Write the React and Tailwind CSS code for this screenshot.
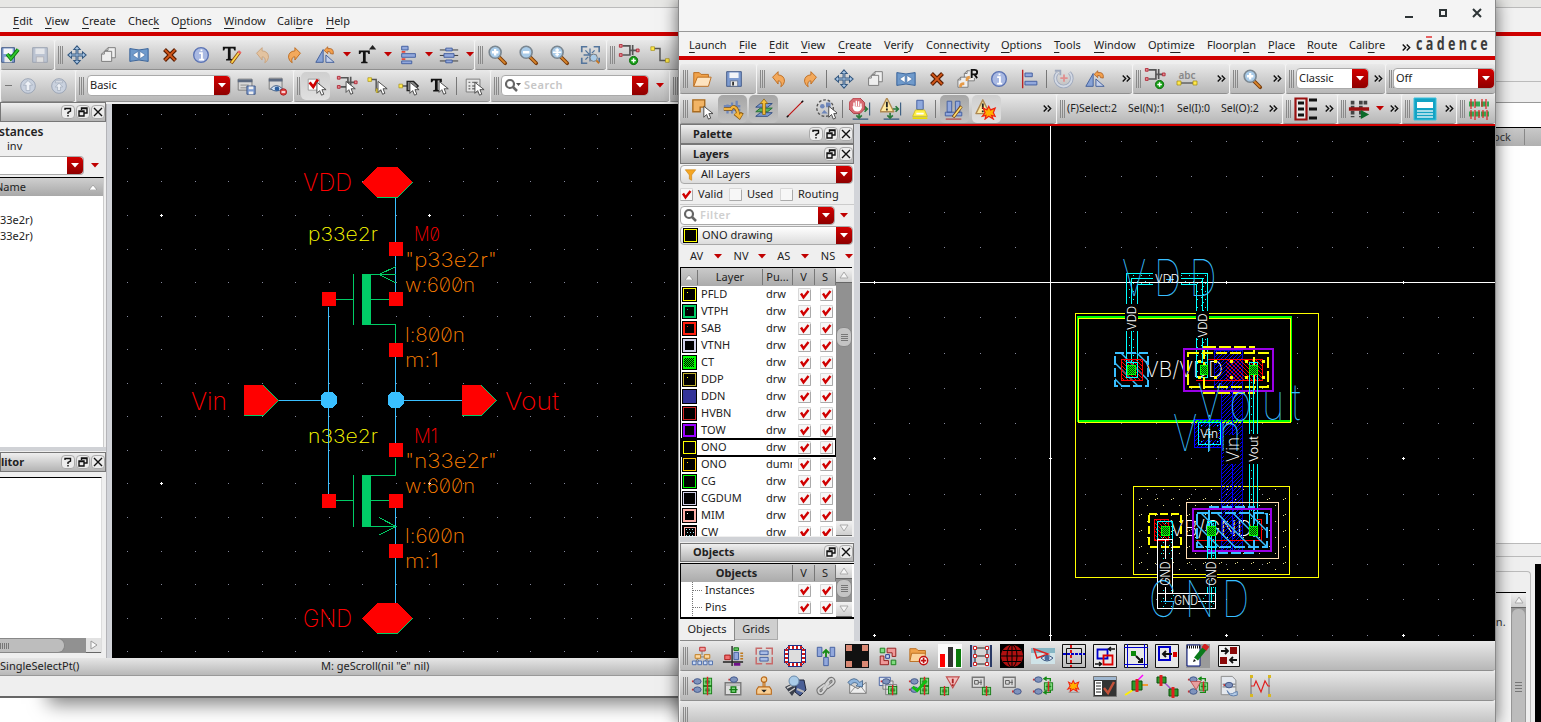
import React from "react";

const UI = "font-['Noto_Sans','Open_Sans',sans-serif]";
const STEEL = "#34587f";

const doc = (x, y) => (
  <g>
    <path d={`M${x + 3} ${y}h8v11h-11v-8z`} fill="#efefef" stroke="#777" />
    <path d={`M${x + 3} ${y}v3h-3`} fill="none" stroke="#777" />
  </g>
);
const cursor = (x, y) => (
  <path d={`M${x} ${y}v12l3-3l2 5l2.500-1l-2-5h4.500z`} fill="#fff" stroke="#444" strokeWidth="1" />
);
const lens = (mark) => (
  <g>
    <path d="M14 14l7 7" stroke="#7a3d0c" strokeWidth="4" strokeLinecap="round" />
    <path d="M14 14l6.500 6.500" stroke="#d9852b" strokeWidth="2" strokeLinecap="round" />
    <circle cx="10" cy="9" r="6.500" fill="#a9cbe8" stroke="#7b8791" strokeWidth="1.800" />
    {mark}
  </g>
);
const transistor = (
  <g fill="none">
    <path d="M5 5h8v10h-8M13 10h2M16 4v11M16 10h6" stroke="#555" strokeWidth="1.800" />
    <path d="M1.500 3.500h3v3h-3zM1.500 13.500h3v3h-3z" fill="#e58a92" stroke="#b02a38" />
    <path d="M20 8.500h3v3h-3z" fill="#e58a92" stroke="#b02a38" />
  </g>
);
const chip = (x, y) => (
  <g>
    <path d={`M${x} ${y + 4}h3M${x + 7} ${y + 4}h3`} stroke="#c33" strokeWidth="2" />
    <ellipse cx={x + 6} cy={y + 4} rx="4" ry="3" fill="#7f93bd" stroke="#3d5488" />
  </g>
);
const cell = (x, y) => (
  <g>
    <rect x={x + 0.5} y={y + 0.5} width="9" height="8" fill="#7fdc7f" stroke="#167a16" />
    <path d={`M${x + 2} ${y + 4.5}h6M${x + 3.5} ${y + 2}v5M${x + 6.5} ${y + 2}v5`} stroke="#167a16" />
    <path d={`M${x + 5} ${y - 1}v11`} stroke="#d22" strokeWidth="1.500" />
  </g>
);
const warn = (
  <g>
    <path d="M8.500 2L16 17H1z" fill="#ffe9a0" stroke="#b08a52" strokeWidth="1.500" strokeLinejoin="round" />
    <path d="M8.500 6v6M8.500 13.500v2" stroke="#222" strokeWidth="2" />
  </g>
);
const burst = (x, y) => (
  <path transform={`translate(${x} ${y})`} d="M0 2l4 2l2-4l2 4l5-2l-2 5l2 4l-4-1l2 4l-5-3l-4 3l1-4l-4 1l3-4z" fill="#ffb000" stroke="#f02010" strokeWidth="1.300" />
);
const tri = (up, x, y) => <path d={up ? `M${x} ${y}l4-5l4 5z` : `M${x} ${y}l4 5l4-5z`} fill="#222" />;

const ICONS = {
  floppy: (
    <g>
      <path d="M4 4h16v16h-16z" fill="#7d9bd0" stroke="#3e5686" />
      <path d="M7 5h10v6h-10z" fill="#f2f4f8" />
      <path d="M8 14h8v6h-8z" fill="#e8e8e8" stroke="#52607a" strokeWidth=".7" />
      <path d="M10 15h2v4h-2z" fill="#333" />
    </g>
  ),
  floppyOk: (
    <g>
      <path d="M4 4h14v16h-14z" fill="#7d9bd0" stroke="#3e5686" />
      <path d="M6 5h10v6h-10z" fill="#f2f4f8" />
      <path d="M7 14h8v6h-8z" fill="#e8e8e8" />
      <path d="M10 11l4 5l8-10" fill="none" stroke="#0b7a0b" strokeWidth="4" />
      <path d="M10 11l4 5l8-10" fill="none" stroke="#2fc62f" strokeWidth="2" />
    </g>
  ),
  floppyOff: (
    <g>
      <path d="M4 4h16v16h-16z" fill="#bcc4d2" stroke="#9aa2b0" />
      <path d="M7 5h10v6h-10z" fill="#e4e6ea" />
      <path d="M8 14h8v6h-8z" fill="#e0e0e0" stroke="#a8a8b0" strokeWidth=".7" />
    </g>
  ),
  move: (
    <path d="M12 2l3.500 4h-2.500v5h5v-2.500l4 3.500l-4 3.500v-2.500h-5v5h2.500l-3.500 4l-3.500-4h2.500v-5h-5v2.500l-4-3.500l4-3.500v2.500h5v-5h-2.500z" fill="#a9c6e6" stroke={STEEL} strokeWidth="1.100" />
  ),
  copy: (
    <g>
      {doc(9, 4)}
      {doc(5, 8)}
    </g>
  ),
  stretch: (
    <g>
      <path d="M2 5q10 3 20 0v14q-10-3-20 0z" fill="#6f9acb" stroke="#2f5c96" />
      <path d="M5 12l6-4v8zM19 12l-6-4v8z" fill="#fff" stroke="#2f5c96" strokeWidth=".6" />
    </g>
  ),
  del: (
    <g>
      <path d="M6 6l12 12M18 6l-12 12" stroke="#5c1d00" strokeWidth="4.500" />
      <path d="M6.500 6.500l11 11M17.500 6.500l-11 11" stroke="#d4581a" strokeWidth="2" />
    </g>
  ),
  info: (
    <g>
      <circle cx="12" cy="12" r="8" fill="#a9b9e2" stroke="#5c74b4" strokeWidth="1.500" />
      <path d="M10 10h3v7M10 17h5.500M12.500 6v2" stroke="#fff" strokeWidth="2" fill="none" />
    </g>
  ),
  textEdit: (
    <g>
      <path d="M2 3h14v4h-1.500l-1-2h-3v11l2 .5v1.500h-7v-1.500l2-.5v-11h-3l-1 2H2z" fill="#111" />
      <path d="M11 21l9-12" stroke="#8a4a10" strokeWidth="4" />
      <path d="M11.500 20.500l8.500-11.500" stroke="#ffd84a" strokeWidth="2" />
      <path d="M19.500 10l1.500-2" stroke="#e66" strokeWidth="3.500" />
    </g>
  ),
  undo: (
    <path d="M6 10l6-6v3.500q7 .5 7 7q-.5 4-4 6q1-3 0-5q-1-1.500-3-1.500v3.500z" transform="translate(-1 0)" fill="#f3a95c" stroke="#bd6a1d" />
  ),
  undoOff: (
    <path d="M5 10l6-6v3.500q7 .5 7 7q-.5 4-4 6q1-3 0-5q-1-1.500-3-1.500v3.500z" fill="#e3c3a0" stroke="#c9a27c" />
  ),
  redo: (
    <path d="M19 10l-6-6v3.500q-7 .5-7 7q.5 4 4 6q-1-3 0-5q1-1.500 3-1.500v3.500z" fill="#f3a95c" stroke="#bd6a1d" />
  ),
  mirror: (
    <g>
      <path d="M10 6v14h-8z" fill="#88a3d6" stroke="#3e5c98" />
      <path d="M13 12l9 8h-9z" fill="#c4d0ea" stroke="#3e5c98" />
      <path d="M11 7l4-4v2q7-1 6 6l-3-.5q.5-2.500-3-2.500v2.500z" fill="#f3a04c" stroke="#a8581a" strokeWidth=".8" />
    </g>
  ),
  textUp: (
    <g>
      <path d="M2 7h12v4h-1.500l-1-2h-2v10l2 .5v1.500h-7v-1.500l2-.5v-10h-2l-1 2H2z" fill="#111" />
      {tri(true, 13, 6)}
    </g>
  ),
  align: (
    <g fill="#92a8dc" stroke="#3f5c9e">
      <path d="M4 2.500h7v4h-7zM4 10.500h15v4h-15zM4 18.500h11v3h-11z" />
      <path d="M4 8.500h4M4 16.500h4" stroke="#e84a3a" strokeWidth="2" />
    </g>
  ),
  distribute: (
    <g fill="#92a8dc" stroke="#3f5c9e">
      <path d="M2 6.500h20M2 12.500h20M2 18.500h20" stroke="#333" />
      <path d="M8.500 4.500h7v3h-7zM6.500 10.500h11v4h-11zM8.500 17.500h7v3h-7z" />
    </g>
  ),
  alignLeft: (
    <g fill="#92a8dc" stroke="#3f5c9e">
      <path d="M4 2v20" stroke="#b22" strokeWidth="1.500" />
      <path d="M6.500 5.500h8v4h-8zM6.500 14.500h13v4h-13z" />
    </g>
  ),
  zoomIn: lens(<path d="M10 5.500v7M6.500 9h7" stroke="#fff" strokeWidth="2.500" />),
  zoomOut: lens(<path d="M6.500 9h7" stroke="#fff" strokeWidth="2.500" />),
  zoomFit: lens(<path d="M10 4.500v9M5.500 9h9M8 6.500h4M8 11.500h4" stroke="#fff" strokeWidth="1.500" />),
  zoomSel: (
    <g>
      <path d="M3 9V3h6M16 3h6v6M22 15v5M3 15v6h6" fill="none" stroke="#54759c" strokeWidth="1.800" />
      <path d="M12 5v14M5 12h14M7 7l4 4M17 7l-3 3M7 17l3-3" stroke="#54759c" strokeWidth="1.400" />
      <circle cx="16" cy="15" r="4" fill="#a9cbe8" stroke="#777" />
      <path d="M19 18l3 3" stroke="#c57624" strokeWidth="2" />
    </g>
  ),
  inst: (
    <g>
      <g transform="translate(0 -3)">{transistor}</g>
      <circle cx="17" cy="18" r="4.500" fill="#18a018" stroke="#0a6a0a" />
      <path d="M17 15.500v5M14.500 18h5" stroke="#fff" strokeWidth="1.600" />
    </g>
  ),
  instCur: (
    <g>
      <g transform="translate(0 -2)">{transistor}</g>
      {cursor(11, 7)}
    </g>
  ),
  wire: (
    <g>
      <path d="M5 5h7v13h8" fill="none" stroke="#555" strokeWidth="1.600" />
      <path d="M2 3h4v4H2zM18 16h4v4h-4z" fill="#ffe84a" stroke="#a08a10" strokeWidth=".7" />
    </g>
  ),
  wireCur: (
    <g>
      <path d="M4 5h6v12h6" fill="none" stroke="#555" strokeWidth="1.600" />
      <path d="M1 3h4v4H1zM10 15h3v4h-3z" fill="#ffe84a" stroke="#a08a10" strokeWidth=".7" />
      {cursor(12, 7)}
    </g>
  ),
  pinCur: (
    <g>
      <path d="M3 12h8" stroke="#555" strokeWidth="1.600" />
      <path d="M1 10h4v4H1z" fill="#ffe84a" stroke="#a08a10" strokeWidth=".7" />
      <path d="M10 7h7l5 5l-5 5h-7z" fill="#888" stroke="#222" strokeWidth="1.500" />
      {cursor(13, 8)}
    </g>
  ),
  textCur: (
    <g>
      <path d="M2 4h12v4h-1.500l-1-2h-2v10l2 .5v1.500h-7v-1.500l2-.5v-10h-2l-1 2H2z" fill="#111" />
      {cursor(11, 7)}
    </g>
  ),
  propCur: (
    <g>
      <path d="M3.500 4.500h15v14h-15z" fill="#e6e6e6" stroke="#777" />
      <path d="M6 8h2M6 12h2M6 15h2M10 8h6M10 12h6M10 15h6" stroke="#777" strokeWidth="1.500" />
      {cursor(13, 8)}
    </g>
  ),
  checkCur: (
    <g>
      <path d="M3.500 4.500h12v12h-12z" fill="#fff" stroke="#999" />
      <path d="M5 8l4 5l5-8" fill="none" stroke="#d00000" strokeWidth="3" />
      {cursor(13, 8)}
    </g>
  ),
  up: (
    <g>
      <circle cx="12" cy="12" r="8" fill="#c9d1de" stroke="#98a2b2" />
      <path d="M12 6l5 5h-3v6h-4v-6h-3z" fill="#eef1f6" stroke="#98a2b2" strokeWidth=".7" />
    </g>
  ),
  top: (
    <g>
      <circle cx="12" cy="12" r="8" fill="#c9d1de" stroke="#98a2b2" />
      <path d="M8 6.500h8v2h-8zM12 9l4 4h-2.500v4h-3v-4h-2.500z" fill="#eef1f6" stroke="#98a2b2" strokeWidth=".7" />
    </g>
  ),
  formSave: (
    <g>
      <path d="M3.500 4.500h15v12h-15z" fill="#d8d8d8" stroke="#777" />
      <path d="M3 5h16v3H3z" fill="#5d6a80" />
      <path d="M6 11h9M6 14h9" stroke="#888" />
      <path d="M13 12h9v9h-9z" fill="#7d9bd0" stroke="#3e5686" />
      <path d="M15 12.500h5v3h-5zM15 18h5v3h-5z" fill="#eee" />
    </g>
  ),
  formEye: (
    <g>
      <path d="M3.500 3.500h14v12h-14z" fill="#d8d8d8" stroke="#777" />
      <path d="M3 4h15v3H3z" fill="#5d6a80" />
      <path d="M5 15q6-7 13 0q-7 5-13 0z" fill="#cfe0f2" stroke="#3a5680" />
      <circle cx="12" cy="15" r="2.500" fill="#2c5fa0" />
      <circle cx="19" cy="18.500" r="3.500" fill="#e04848" stroke="#a82020" />
      <path d="M17 18.500h4" stroke="#fff" strokeWidth="1.500" />
    </g>
  ),
  open: (
    <g>
      <path d="M3 20V5h6l2 2h8v4" fill="#f0a24a" stroke="#b96a1b" />
      <path d="M3 20l4-10h15l-3 10z" fill="#fde3bf" stroke="#b96a1b" />
    </g>
  ),
  copyR: (
    <g>
      {doc(8, 3)}
      {doc(1, 10)}
      <path d="M4 21q-1-4 4-4M11 14q-1-4 4-4" stroke="#e59a48" strokeWidth="3" fill="none" />
      <path d="M14 1h9v10h-9z" fill="#ddd" />
      <path d="M16 11V2h3q3 0 3 2.500t-3 2.500h-3M19 7l3 4" stroke="#111" strokeWidth="2" fill="none" />
    </g>
  ),
  rotate: (
    <g fill="none">
      <path d="M5 5a9 9 0 1 0 13 0" stroke="#9fa9bd" strokeWidth="4" />
      <path d="M5 5a9 9 0 1 0 13 0" stroke="#d3d9e4" strokeWidth="2" />
      <path d="M2 3h6v5" stroke="#9fa9bd" strokeWidth="2" />
      <path d="M12 7v8M8 11h8" stroke="#e09090" strokeWidth="2" />
    </g>
  ),
  selRect: (
    <g>
      <path d="M2 2h13v8h-5v5h-8z" fill="#f2b465" stroke="#a86a1e" strokeWidth="1.500" />
      {cursor(14, 9)}
    </g>
  ),
  fence: (
    <g>
      <path d="M6 7v10M11 5v12M16 3v12M2 13h18M2 9h18" stroke="#6f87ba" strokeWidth="2.500" />
      <path d="M2 12h8q2-4 5-1q2 2 3 8M14 17l5 4l3-5" fill="none" stroke="#8a5a10" strokeWidth="4" />
      <path d="M2 12h8q2-4 5-1q2 2 3 8M14.500 17l4.500 4l2.500-4" fill="none" stroke="#f4b43c" strokeWidth="2.400" />
    </g>
  ),
  stack: (
    <g>
      <path d="M3 20l5-4h13l-5 4z" fill="#7d9bd0" stroke="#2f4a80" />
      <path d="M3 15l5-4h13l-5 4z" fill="#5fb05f" stroke="#1f6a2f" />
      <path d="M3 10l5-4h13l-5 4z" fill="#7d9bd0" stroke="#2f4a80" />
      <path d="M12 1l4 5h-2.500v12h-3v-12h-2.500z" fill="#f7c23c" stroke="#8a6010" strokeWidth=".8" />
    </g>
  ),
  ruler: (
    <g>
      <path d="M4 20L20 4" stroke="#c01010" strokeWidth="1.200" />
      <path d="M3 21l2-2M19 5l2-2" stroke="#111" strokeWidth="1.500" />
    </g>
  ),
  lasso: (
    <g>
      <circle cx="11" cy="11" r="9" fill="none" stroke="#555" strokeWidth="1.500" strokeDasharray="3 2" />
      <path d="M12 5h5v5h-5z" fill="#6f87ba" />
      <circle cx="8" cy="9" r="2.500" fill="#6f87ba" />
      <path d="M7 17l3-4l4 4z" fill="#6f87ba" />
      {cursor(15, 9)}
    </g>
  ),
  stop: (
    <g>
      <path d="M22.500 5v14M4 23h17" stroke="#34587f" strokeWidth="1.200" />
      <path d="M13 12h7M17 9l3 3l-3 3M11 16v5M8 19l3 3l3-3" stroke="#2a7a3a" strokeWidth="1.800" fill="none" />
      <path d="M5 0h7l5 5v7l-5 5H5l-5-5V5z" fill="#d86a72" stroke="#a83a42" />
      <path d="M5.500 10V5M8 9V3M10.500 9V3.500M13 10V6M4.500 9q1 5 4.500 5t4.500-4.500" stroke="#fff" strokeWidth="1.600" fill="#fff" />
    </g>
  ),
  warnArrows: (
    <g>
      <path d="M22.500 5v14M4 23h17" stroke="#34587f" strokeWidth="1.200" />
      <path d="M13 12h7M17 9l3 3l-3 3M11 16v5M8 19l3 3l3-3" stroke="#2a7a3a" strokeWidth="1.800" fill="none" />
      <g transform="translate(-1 -2)">{warn}</g>
    </g>
  ),
  lamp: (
    <g>
      <path d="M8.500 2.500h7v10h-7z" fill="#8fa9dd" stroke="#3f5c9e" />
      <path d="M7 13h10l3 7H4z" fill="#fff04a" stroke="#c8b400" strokeWidth=".7" />
      <path d="M8 17h8" stroke="#fff" strokeWidth="2" />
      <path d="M4 22h16" stroke="#e8dc00" strokeWidth="2" />
    </g>
  ),
  drawEdit: (
    <g>
      <path d="M4.500 3.500h5v12h-5zM13.500 3.500h5v12h-5zM2.500 15.500h18v4h-18z" fill="#92a8dc" stroke="#3f5c9e" />
      <path d="M11 21l9-12" stroke="#7a4410" strokeWidth="3.500" />
      <path d="M11.500 20.500l8.500-11" stroke="#ffe070" strokeWidth="1.800" />
      <path d="M3 23h17" stroke="#a22" />
    </g>
  ),
  warnBurst: (
    <g>
      {warn}
      {burst(9, 9)}
    </g>
  ),
  list: (
    <g>
      <path d="M1.500 1.500h11v21h-11z" fill="#e8e8e8" stroke="#9a1010" strokeWidth="2.200" />
      <path d="M4 6h6M4 12h6M4 18h6M15 3h8M15 12h8M15 21h8" stroke="#111" strokeWidth="3" />
    </g>
  ),
  railPlay: (
    <g>
      <path d="M5 3v18M14 3v18M19 3v5" stroke="#444" strokeWidth="4" strokeDasharray="4 1.500" />
      <path d="M1 12h22" stroke="#9a1010" strokeWidth="4" />
      <path d="M14 13l9 5l-9 5z" fill="#0c6a2a" />
    </g>
  ),
  form: (
    <g>
      <path d="M1 1h22v22H1z" fill="#13a3c4" stroke="#3cc0dc" strokeWidth="1" />
      <path d="M4 5h16v6H4z" fill="#fff" />
      <path d="M4 14h16M4 17h16M4 20h16" stroke="#d4eff5" strokeWidth="1.500" />
    </g>
  ),
  rails: (
    <g>
      <path d="M2 7h20M2 17h20" stroke="#34a853" strokeWidth="5" strokeDasharray="5 1" />
      <path d="M4 2v10M8 2v9M15 2v8M19 2v10M4 13v9M8 13v10M12 13v8M16 13v8M20 13v10" stroke="#e02020" strokeWidth="1.200" />
    </g>
  ),
  tree: (
    <g fill="none">
      <path d="M12 6v5M6 13h12M5 19l2-4l2 4M15 19l2-4l3 4" stroke="#777" />
      <path d="M9.500 2.500h6v4h-6z" fill="#f0a0a0" stroke="#b22" />
      <path d="M4.500 10.500h6v4h-6zM14.500 10.500h6v4h-6z" fill="#ffd9a0" stroke="#c07818" />
      <path d="M1.500 17.500h4v4h-4zM7.500 17.500h4v4h-4zM13.500 17.500h4v4h-4zM19.500 17.500h4v4h-4z" fill="#cddcf4" stroke="#4668a8" />
    </g>
  ),
  floor: (
    <g>
      <path d="M11 1v22M1 18.500h22" stroke="#222" strokeWidth="1.500" />
      <path d="M3 11h6v5H3z" fill="#f07070" stroke="#a11" />
      <path d="M13 3h5v3h-5z" fill="#62c262" stroke="#171" />
      <path d="M13 8h5v8h-5z" fill="#92a8dc" stroke="#3f5c9e" />
      <path d="M20 9h3M20 12h3M20 15h3" stroke="#c07818" strokeWidth="1.500" />
      <path d="M13 21h7" stroke="#70108a" strokeWidth="3" />
    </g>
  ),
  bracket: (
    <g fill="none">
      <path d="M10 3.500H3.500v7M14 3.500h7v7M3.500 13v7.500H10M14 20.500h7V13" stroke="#c86a6a" strokeWidth="1.600" />
      <path d="M7.500 6.500h9v4h-9zM7.500 13.500h9v4h-9z" fill="#a9bde6" stroke="#3f5c9e" />
    </g>
  ),
  ring: (
    <g fill="none">
      <path d="M5 3h14l3 3v12l-3 3H5l-3-3V6z" fill="#ddd" stroke="#1c2f8a" strokeWidth="1" />
      <path d="M3.500 5v14M20.500 5v14M5 3.500h14M5 20.500h14" stroke="#fff" strokeWidth="4" />
      <path d="M3.500 5v14M20.500 5v14M5 3.500h14M5 20.500h14" stroke="#d01818" strokeWidth="4" strokeDasharray="2 2" />
      <path d="M1.500 5v14M5.500 5v14M18.500 5v14M22.500 5v14M5 1.500h14M5 5.500h14M5 18.500h14M5 22.500h14" stroke="#1c2f8a" />
    </g>
  ),
  shift: (
    <g fill="#92a8dc" stroke="#3f5c9e">
      <path d="M2.500 2.500h5v10h-5zM16.500 2.500h5v10h-5zM9.500 13.500h5v9h-5z" />
      <path d="M12 13V6M8.500 9L12 5.500L15.500 9" stroke="#168a16" strokeWidth="2" fill="none" />
    </g>
  ),
  cross: (
    <g>
      <path d="M0 0h24v24H0z" fill="#111" />
      <path d="M1 1h6v6H1zM17 1h6v6h-6zM1 17h6v6H1zM17 17h6v6h-6z" fill="#d98873" />
    </g>
  ),
  blocks: (
    <g>
      <path d="M3.500 3.500h5v5h-5zM15.500 16.500h5v5h-5z" fill="#7fdc7f" stroke="#167a16" />
      <path d="M11 3.500h9.500v9h-4v-4h-5.500zM3.500 12h4v5h5v4.500h-9z" fill="#e99" stroke="#901818" />
      <path d="M9.500 10.500h4v4h-4z" fill="#cddcf4" stroke="#1c2f8a" />
    </g>
  ),
  folderAdd: (
    <g>
      <path d="M2 17V4h7l2 2h8v4" fill="#f0a24a" stroke="#b96a1b" />
      <path d="M2 18l2-9h15l-1 9z" fill="#fbd29b" stroke="#b96a1b" />
      <circle cx="17" cy="17" r="4.500" fill="#fff" stroke="#c01010" strokeWidth="1.500" />
      <path d="M17 14v6M14 17h6" stroke="#c01010" strokeWidth="1.800" />
    </g>
  ),
  bars: (
    <g>
      <path d="M0 0h24v24H0z" fill="#fafafa" />
      <path d="M2 10h5v13H2z" fill="#f00" />
      <path d="M10 3h5v20h-5z" fill="#333" />
      <path d="M18 5h5v18h-5z" fill="#0a7a0a" />
    </g>
  ),
  ladder: (
    <g>
      <path d="M1 1h22v22H1z" fill="#b9c6de" />
      <path d="M7 1h10v22H7z" fill="#d6d6d6" />
      <path d="M2 1v22M22 1v22" stroke="#2a3a66" strokeWidth="2" />
      <path d="M6 4h12M6 12h12M6 20h12M6 4v16M18 4v16" stroke="#222" fill="none" />
      <path d="M4.500 2.500h3v3h-3zM16.500 2.500h3v3h-3zM4.500 10.500h3v3h-3zM16.500 10.500h3v3h-3zM4.500 18.500h3v3h-3zM16.500 18.500h3v3h-3z" fill="#fff" stroke="#c22" />
    </g>
  ),
  globe: (
    <g>
      <path d="M0 0h24v24H0z" fill="#000" />
      <circle cx="12" cy="12" r="11" fill="#b01010" />
      <g fill="none" stroke="#000" strokeWidth="1">
        <ellipse cx="12" cy="12" rx="5" ry="11" />
        <path d="M12 1v22M1 12h22M3 6.500h18M3 17.500h18" />
      </g>
    </g>
  ),
  viewEye: (
    <g>
      <path d="M0 4h24v16H0z" fill="#cfe3e8" />
      <path d="M0 4h24v5H0z" fill="#86b6c4" />
      <path d="M3 5l14 5l-11 4z" fill="none" stroke="#d22" strokeWidth="1.500" />
      <path d="M10 14q6-5 12 0q-6 6-12 0z" fill="#dfe9f6" stroke="#3a5680" />
      <circle cx="16" cy="14" r="2.500" fill="#49699c" />
    </g>
  ),
  boxCross: (
    <g fill="none">
      <path d="M.5.5h23v23H.5z" stroke="#111" />
      <path d="M4.500 4.500h15v15h-15z" stroke="#111" />
      <path d="M9 1v22" stroke="#d00" strokeWidth="1.800" strokeDasharray="3 2" />
      <path d="M1 10h22" stroke="#00c" strokeWidth="1.800" strokeDasharray="3 1" />
    </g>
  ),
  boxSwap: (
    <g fill="none">
      <path d="M.5.5h23v23H.5z" stroke="#111" fill="#e8e8e8" />
      <path d="M4.500 5.500h10v9h-10z" stroke="#00c" strokeWidth="1.800" />
      <path d="M10.500 11.500h9v9h-9z" stroke="#d00" strokeWidth="1.800" />
      <path d="M22 5h-6M18 3l-2.500 2l2.500 2M2 20h6M6 18l2.500 2l-2.500 2" stroke="#111" strokeWidth="1.500" />
    </g>
  ),
  boxMove: (
    <g fill="none">
      <path d="M.5.5h23v23H.5z" stroke="#111" fill="#e8e8e8" />
      <path d="M3.500 0v24M20.500 0v24M0 3.500h24M0 20.500h24" stroke="#00c" />
      <path d="M7 7h5v5H7z" fill="#0a8a0a" />
      <path d="M12 12l6 6M18 14v4h-4" stroke="#111" strokeWidth="2" />
    </g>
  ),
  boxIn: (
    <g fill="none">
      <path d="M.5.5h23v23H.5z" stroke="#111" fill="#e8e8e8" />
      <path d="M4 3h11v13H4z" stroke="#00c" strokeWidth="2" />
      <path d="M17 10H8M11 7l-3 3l3 3" stroke="#111" strokeWidth="2" />
      <path d="M18 8h4v5h-4z" fill="#d00" />
    </g>
  ),
  notePen: (
    <g>
      <path d="M0 0h24v24H0z" fill="#9a9a9a" />
      <path d="M1 1h13v21H1z" fill="#fff" stroke="#00107a" />
      <path d="M1 3h13" stroke="#111" strokeWidth="3" strokeDasharray="1 1" />
      <path d="M10 15l9-11" stroke="#0a7a1a" strokeWidth="5" />
      <path d="M18 5l3-4" stroke="#d02020" strokeWidth="6" />
      <path d="M7 18l3-1l-2-2z" fill="#111" />
    </g>
  ),
  boxArrows: (
    <g fill="none">
      <path d="M1.500 1.500h21v21h-21z" stroke="#111" fill="#f0f0f0" />
      <path d="M13 3h7v7h-7zM3 13h7v7H3z" fill="#8a0808" />
      <path d="M4 7h7M8 4l3 3l-3 3M20 16h-7M16 13l-3 3l3 3" stroke="#111" strokeWidth="1.800" />
    </g>
  ),
  pairs: (<g>{chip(1, 3)}{chip(1, 12)}{cell(13, 3)}{cell(13, 12)}</g>),
  bag: (
    <g>
      <path d="M3.500 8.500h17v13h-17z" fill="#dcdcdc" stroke="#777" strokeWidth="1.500" />
      <path d="M4 11h16" stroke="#999" />
      <path d="M8 16h9M10 13h5v6h-5z" stroke="#167a16" fill="#7fdc7f" strokeWidth="1.500" />
      {chip(7, 1)}
    </g>
  ),
  stamp: (
    <g fill="#f9cf94" stroke="#b96a1b" strokeWidth="1.200">
      <circle cx="12" cy="5" r="3" />
      <path d="M11 8h2v5h-2zM6 13h12l2 3v5H4v-5z" />
      <path d="M9 16h6l-3 3z" fill="#222" stroke="none" />
    </g>
  ),
  binocular: (
    <g>
      <path d="M2 13l8-4l5 4l-6 9z" fill="#3a3f4a" />
      <path d="M4 14l6-3M6 18l6-4" stroke="#ccc" strokeWidth="1.500" />
      <path d="M14 6h7l2 10l-6 6l-5-4z" fill="#4a5f96" stroke="#20263a" />
      <path d="M14 15l7 3" stroke="#bbb" strokeWidth="2" />
      <circle cx="11" cy="7" r="5" fill="#a9cbe8" stroke="#6a8aaa" />
    </g>
  ),
  link: (
    <g fill="none" strokeLinecap="round">
      <g stroke="#777" strokeWidth="4.500">
        <path d="M12 14l-4 5q-3 2-4-1q-1-2 2-4l4-3M12 10l4-5q3-2 4 1q1 2-2 4l-4 3" />
        <path d="M9 15l6-6" strokeWidth="3" />
      </g>
      <path d="M12 14l-4 5q-3 2-4-1q-1-2 2-4l4-3M12 10l4-5q3-2 4 1q1 2-2 4l-4 3M9 15l6-6" stroke="#d4d4d4" strokeWidth="2" />
    </g>
  ),
  mail: (
    <g>
      <path d="M4 10l9 5l9-7v12H4z" fill="#eee" stroke="#777" />
      <path d="M4 20l6-7M22 20l-6-8" stroke="#888" />
      <path d="M2 8q7-8 13 0l3-2v7l-7-1l2-2q-4-4-8 1z" fill="#8fb4dc" stroke={STEEL} strokeWidth=".8" />
    </g>
  ),
  copies: (
    <g>
      <path d="M2.500 2.500h12v9h-12z" fill="#dfe6f2" stroke="#3f5c9e" />
      <path d="M6.500 6.500h11v9h-11zM9.500 10.500h12v11h-12z" fill="#e8e8e8aa" stroke="#777" />
      {chip(4, 3)}
      {cell(12, 12)}
    </g>
  ),
  pairsOk: (
    <g>
      {chip(1, 3)}{chip(1, 12)}{cell(13, 3)}{cell(13, 12)}
      <path d="M5 13l5 4l10-11" fill="none" stroke="#0fbf0f" strokeWidth="3" />
    </g>
  ),
  warnCell: (
    <g>
      <path d="M8 2h14l-7 12z" fill="#f3c0c0" stroke="#c05050" strokeWidth="1.200" />
      <path d="M15 4v5M15 10v2" stroke="#a22" strokeWidth="2" />
      {cell(1, 13)}
    </g>
  ),
  schCell: (
    <g>
      <path d="M2.500 2.500h13v11h-13z" fill="#dcdcdc" stroke="#777" strokeWidth="1.500" />
      <path d="M5 6h4v4H5zM9 8h4M12 5v6" fill="none" stroke="#555" />
      {cell(13, 13)}
    </g>
  ),
  schChip: (
    <g>
      <path d="M2.500 2.500h13v11h-13z" fill="#dcdcdc" stroke="#777" strokeWidth="1.500" />
      <path d="M5 6h4v4H5zM9 8h4M12 5v6" fill="none" stroke="#555" />
      {chip(12, 14)}
    </g>
  ),
  loop: (
    <g>
      {chip(1, 1)}{chip(1, 14)}
      <path d="M20 7V4h-6M16 2l-3 2l3 2M20 16v3h-6M16 17l-3 2l3 2" fill="none" stroke="#168a16" strokeWidth="1.500" />
      {cell(13, 8)}
    </g>
  ),
  burst: (
    <g>
      <g transform="translate(12 12) scale(.85) translate(-12 -12)">{burst(5, 5)}</g>
      <path d="M6 19h12" stroke="#999" />
    </g>
  ),
  screenOk: (
    <g>
      <path d="M.5 2.500h23v20H.5z" fill="#333" stroke="#777" />
      <path d="M1 3h22v3H1z" fill="#9fb7d0" />
      <path d="M2 7h7v14H2z" fill="#fff" />
      <path d="M3 9h5M3 12h5M3 15h5M3 18h5" stroke="#222" />
      <path d="M11 14l4 5l6-11" fill="none" stroke="#c4523a" strokeWidth="2.500" />
    </g>
  ),
  probe: (
    <g>
      <path d="M13 7l6-6" stroke="#f0f" strokeWidth="1.500" />
      <path d="M17 11h7" stroke="#f80" strokeWidth="1.500" />
      <path d="M1 21l8-5" stroke="#fe0" strokeWidth="2" />
      <path d="M8 7h10v9H8z" fill="#2a9a2a" stroke="#0a500a" />
      <path d="M13 5v13" stroke="#e02020" strokeWidth="3" />
    </g>
  ),
  probe2: (
    <g>
      <path d="M9 8l8 8" stroke="#a050d0" strokeWidth="1.500" />
      <path d="M2 3h9v6H2zM14 15h9v7h-9z" fill="#2a9a2a" stroke="#0a500a" />
      <path d="M6 1v11M18 13v11" stroke="#e02020" strokeWidth="3" />
    </g>
  ),
  loopWarn: (
    <g>
      {chip(1, 1)}{chip(1, 14)}
      <path d="M20 7V4h-6M16 2l-3 2l3 2M20 16v3h-6" fill="none" stroke="#168a16" strokeWidth="1.500" />
      {cell(13, 8)}
      <path d="M4 7h11l-5 9z" fill="#e7a0a0" stroke="#c05050" />
    </g>
  ),
  docWave: (
    <g>
      <path d="M3.500 1.500h12l4 4v16h-16z" fill="#e4e8ee" stroke="#888" />
      <path d="M5 10h14M5 13h14" stroke="#666" />
      {chip(6, 7)}
      <path d="M10 17q3 6 8 2l3-1v4q-9 3-11-5z" fill="#b4cbe6" stroke="#5a7ba8" />
    </g>
  ),
  wave: (
    <g fill="none">
      <path d="M3 2v20M21 2v20" stroke="#555" strokeWidth=".8" />
      <path d="M2 1h3v3H2zM20 1h3v3h-3zM2 20h3v3H2zM20 20h3v3h-3z" fill="#d8b820" />
      <path d="M3 12h3l2-5l5 11l4-11l3 5h2" stroke="#e02020" strokeWidth="1.200" />
    </g>
  ),
  funnel: <path d="M3 3h18l-7 9v9l-4-2v-7z" fill="#f5a623" stroke="#c77d0d" strokeWidth="1" />,
};

const Ico = ({ n, on, light, w = "w-[31px]" }) => (
  <span className={`flex h-full ${w} shrink-0 items-center justify-center`}>
    <span
      className={
        on
          ? light
            ? "flex h-[28px] w-[29px] items-center justify-center rounded-[5px] bg-linear-to-b from-[#cfcfcf] to-[#e0e0e0]"
            : "flex h-[28px] w-[29px] items-center justify-center rounded-[5px] bg-linear-to-b from-[#a6a6a6] to-[#c2c2c2]"
          : "flex"
      }
    >
      <svg width="22" height="22" viewBox="0 0 24 24">{ICONS[n]}</svg>
    </span>
  </span>
);
const BigIco = ({ n, w = "w-[31px]" }) => (
  <span className={`flex ${w} shrink-0 items-center justify-center`}>
    <svg width="24" height="24" viewBox="0 0 24 24">{ICONS[n]}</svg>
  </span>
);
const Arrow = ({ w = "w-[12px]" }) => (
  <span className={`flex ${w} shrink-0 items-center justify-center`}>
    <svg width="8" height="5" viewBox="0 0 8 5"><path d="M0 0h8L4 4.500z" fill="#c00000" /></svg>
  </span>
);
const VLine = () => <span className="mx-[1px] h-[18px] w-px shrink-0 bg-[#777]" />;
const More = ({ w = "w-[12px]" }) => (
  <span className={`flex ${w} shrink-0 items-center justify-center`}>
    <svg width="9" height="7" viewBox="0 0 9 7"><path d="M.7.5l3 3l-3 3M4.700.5l3 3l-3 3" fill="none" stroke="#111" strokeWidth="1.400" /></svg>
  </span>
);
const Group = ({ w, children, plain }) => (
  <div className={`flex h-full ${w} shrink-0 items-center overflow-hidden rounded-[3px] border-b border-l border-b-[#8f8f8f] border-l-[#f4f4f4] bg-linear-to-b from-[#e9e9e9] to-[#b7b7b7]`}>
    {!plain && (
      <span className="flex w-[6px] shrink-0 gap-px overflow-visible pl-[3px]">
        <span className="h-[18px] w-px shrink-0 bg-[#8a8a8a]" />
        <span className="h-[18px] w-px shrink-0 bg-[#8a8a8a]" />
        <span className="h-[18px] w-px shrink-0 bg-[#8a8a8a]" />
      </span>
    )}
    {children}
  </div>
);
const RedDrop = ({ w = "w-[16px]" }) => (
  <span className={`flex h-full ${w} shrink-0 items-center justify-center rounded-r-[4px] bg-linear-to-b from-[#d40000] to-[#8e0000]`}>
    <svg width="8" height="5" viewBox="0 0 8 5"><path d="M0 0h8L4 4.500z" fill="#fff" /></svg>
  </span>
);
const Combo = ({ cls, children, grad }) => (
  <div className={`flex ${cls} shrink-0 items-center rounded-[4px] border border-[#aaa] ${grad ? "bg-linear-to-b from-white to-[#dcdcdc]" : "bg-white"} text-[11px] text-[#222]`}>
    <span className="flex min-w-0 flex-1 items-center overflow-hidden whitespace-nowrap pl-[2px]">{children}</span>
    <RedDrop />
  </div>
);
const Glass = ({ size = 15, drop }) => (
  <svg width={size} height="15" viewBox={`0 0 ${size} 15`} className="shrink-0">
    <circle cx="6" cy="6" r="4" fill="none" stroke="#666" strokeWidth="2.200" />
    <path d="M9 9l4 4" stroke="#666" strokeWidth="2.500" />
    {drop && <path d="M12 5h5l-2.500 3z" fill="#555" />}
  </svg>
);
const DockBtn = ({ k }) => (
  <span className="flex h-[14px] w-[14px] items-center justify-center rounded-[4px] border border-[#aaa] bg-[#ececec]">
    <svg width="10" height="10" viewBox="0 0 10 10" fill="none" stroke="#111" strokeWidth="1.400">
      {k === "q" && <path d="M2 3V1.500h5.500v2.500l-2.500 1.500v1.500M5 8v1.500" />}
      {k === "r" && <path d="M3.500 3V1h5.500v5h-2.500M1 4h5v5h-5zM1 4.500h5M3.500 1.500h5.500" />}
      {k === "x" && <path d="M1 1l8 8M9 1l-8 8" />}
    </svg>
  </span>
);
const DockHead = ({ title, q, cls = "h-[20px]", pad = "pl-[13px]" }) => (
  <div className={`flex ${cls} shrink-0 items-center justify-end gap-[1px] border border-[#777] bg-linear-to-b from-[#efefef] to-[#b4b4b4] pb-px ${pad}`}>
    <span className="mr-auto whitespace-nowrap text-[11px] font-bold leading-[16px] text-[#222]">{title}</span>
    {q && <DockBtn k="q" />}
    <DockBtn k="r" />
    <DockBtn k="x" />
  </div>
);
const U = ({ w, t, i }) => (
  <span className={`${w} shrink-0 whitespace-nowrap`}>
    {t.slice(0, i)}
    <span className="underline underline-offset-[3px]">{t[i]}</span>
    {t.slice(i + 1)}
  </span>
);
const Check = ({ off }) => (
  <svg width="13" height="13" viewBox="0 0 13 13" className="shrink-0">
    <path d="M.5.5h12v12H.5z" fill="#f7f7f7" stroke="#d8d8d8" />
    <path d="M.5 12.500h12V2" fill="none" stroke="#aaa" />
    {!off && <path d="M3 5.500l2.500 4L10.500 3" fill="none" stroke="#d00000" strokeWidth="2.400" />}
  </svg>
);
const ScrollBtn = ({ d }) => (
  <span className="flex h-[15px] w-full shrink-0 items-center justify-center border-b border-[#666] bg-linear-to-b from-[#f2f2f2] to-[#cfcfcf]">
    <svg width="10" height="8" viewBox="0 0 10 8"><path d={d} fill="#f6f6f6" stroke="#aaa" /></svg>
  </span>
);
const UP = "M1 7h8L5 1z";
const DOWN = "M1 1h8L5 7z";
const Thumb = ({ h }) => (
  <span className={`flex ${h} w-full shrink-0 flex-col items-center justify-center gap-px rounded-[7px] border border-[#888] bg-[#c4c4c4]`}>
    {[0, 1, 2, 3].map((k) => <span key={k} className="h-px w-[7px] bg-[#777]" />)}
  </span>
);

/* Text drawn in the stroke style of the drawing canvases. */
const T = ({ x, y, w, s, c, children, rot, wt = 200 }) => (
  <text
    x={rot ? 0 : x}
    y={rot ? 0 : y}
    transform={rot ? `translate(${x} ${y}) rotate(-90)` : undefined}
    textLength={w}
    lengthAdjust="spacingAndGlyphs"
    fontSize={s}
    fontWeight={wt}
    fill={c}
    fontFamily="Inter, 'DejaVu Sans', sans-serif"
    style={{ fontFeatureSettings: "'zero' 1" }}
  >
    {children}
  </text>
);

/* Large net label: narrow letters, each with its own start. */
const Wide = ({ xs, y, k, children }) => (
  <text
    transform={`scale(${k} 1)`}
    x={xs.map((v) => (v / k).toFixed(1)).join(" ")}
    y={y}
    fontSize="50"
    fontWeight="100"
    fill="#39bfff"
    fontFamily="Inter, 'DejaVu Sans', sans-serif"
  >
    {children}
  </text>
);

const dots = (x0, y0, p, n, m, i0, j0, major) => {
  const out = [];
  for (let i = i0; i < n; i++)
    for (let j = j0; j < m; j++) {
      const x = Math.round(x0 + p * i);
      const y = Math.round(y0 + p * j);
      out.push(
        i % major === 0 && j % major === 0 ? (
          <path key={`${i}_${j}`} d={`M${x - 1} ${y}h3v1h-3zM${x} ${y - 1}h1v3h-1z`} fill="#fff" />
        ) : (
          <rect key={`${i}_${j}`} x={x} y={y} width="1" height="1" fill="#85889c" />
        )
      );
    }
  return out;
};

const RED = "#ff0000";
const ORG = "#ff8000";
const YEL = "#ffff00";
const BLU = "#39bfff";
const GRN = "#00cc66";

const Schematic = () => (
  <svg width="567" height="554" viewBox="112 104 567 554" className="shrink-0 bg-black">
    <g shapeRendering="crispEdges">
      {dots(161, 215, 33.55, 16, 14, -1, -3, 8)}
      <path d="M395.500 197v95M328.500 307v187M395.500 357v86M278 400.500h50M396 400.500h66M395.500 508v95" stroke={BLU} fill="none" />
      <path d="M353.500 274v51M371 274.500h25M336 299.500h17M371 299.500h18M371 324.500h24.500v19M353.500 475v52M371 475.500h24.500v-18M336 500.500h17M371 500.500h18M371 526.500h25" stroke={GRN} fill="none" />
      <path d="M396 266.500l-17 8l17 8.500M379 517.500l17 9l-17 8.500" stroke={GRN} fill="none" />
      <path d="M362 274h9v51h-9zM362 475h9v52h-9z" fill={GRN} />
      {[[389, 242], [389, 292], [322, 292], [389, 343], [389, 443], [322, 494], [389, 494], [389, 544]].map(([x, y]) => (
        <rect key={`${x}${y}`} x={x} y={y} width="14" height="14.400" fill={RED} />
      ))}
      {[0, 436].map((d) => (
        <g key={d} transform={`translate(0 ${d})`}>
          <path d="M362 182.500L377 167.500h21l15 15L398 198h-21z" fill={GRN} />
          <path d="M362 182.500L377 167h20.500l15 15.500l-15 14.500H377z" fill={RED} />
        </g>
      ))}
      {[244, 462].map((x) => (
        <g key={x} transform={`translate(${x} 385)`}>
          <path d="M0 0h20l15 15.500L20 31H0z" fill={GRN} />
          <path d="M0 0h19l15 15.500L19 30H0z" fill={RED} />
        </g>
      ))}
    </g>
    <T x={303} y={191} w={49} s={24.500} c={RED}>VDD</T>
    <T x={303} y={627} w={49} s={24.500} c={RED}>GND</T>
    <T x={191} y={410} w={36} s={24.500} c={RED}>Vin</T>
    <T x={505} y={410} w={54} s={24.500} c={RED}>Vout</T>
    <T x={308} y={241} w={70} s={19} c={YEL}>p33e2r</T>
    <T x={308} y={443} w={70} s={19} c={YEL}>n33e2r</T>
    <T x={414} y={241} w={26} s={19.500} c={RED}>M0</T>
    <T x={414} y={443} w={24} s={19.500} c={RED}>M1</T>
    <T x={405} y={267} w={92} s={20} c={ORG}>"p33e2r"</T>
    <T x={405} y={292} w={70} s={20} c={ORG}>w:600n</T>
    <T x={405} y={342} w={60} s={20} c={ORG}>l:800n</T>
    <T x={405} y={367} w={34} s={20} c={ORG}>m:1</T>
    <T x={405} y={468} w={92} s={20} c={ORG}>"n33e2r"</T>
    <T x={405} y={493} w={70} s={20} c={ORG}>w:600n</T>
    <T x={405} y={543} w={60} s={20} c={ORG}>l:600n</T>
    <T x={405} y={568} w={34} s={20} c={ORG}>m:1</T>
    <path d="M328.500 425v22" stroke={BLU} shapeRendering="crispEdges" />
    {[328.5, 395.5].map((x) => (
      <path key={x} shapeRendering="crispEdges" transform={`translate(${x} 400)`} d="M-4-8h8l4 4v8l-4 4h-8l-4-4v-8z" fill={BLU} />
    ))}
  </svg>
);

const contact = (x, y, w = 8) => (
  <g key={`${x}-${y}`}>
    <rect x={x + 0.5} y={y + 0.5} width={w} height="9" fill="url(#gdot)" stroke="#00ff00" />
  </g>
);

const LayoutCanvas = () => (
  <svg width="635" height="515" viewBox="860 126 635 515" className="shrink-0 bg-black">
    <defs>
      <pattern id="gdot" width="2" height="2" patternUnits="userSpaceOnUse">
        <path d="M0 0h2v2H0z" fill="#053005" />
        <path d="M0 0h1v1H0zM1 1h1v1H1z" fill="#00ff00" />
      </pattern>
      <pattern id="cdot" width="8" height="8" patternUnits="userSpaceOnUse">
        <path d="M1 1h1v1H1zM5 3h1v1H5zM3 6h1v1H3z" fill="#00ffff" />
      </pattern>
      <pattern id="ydot" width="16" height="16" patternUnits="userSpaceOnUse">
        <path d="M3 3h1v1H3zM5 2h1v1H5zM11 9h1v1h-1z" fill="#e8e090" />
      </pattern>
      <pattern id="bh" width="4" height="4" patternUnits="userSpaceOnUse">
        <path d="M-1 1l2-2M0 4l4-4M3 5l2-2" stroke="#0000ff" strokeWidth="1" />
      </pattern>
      <pattern id="rh" width="4" height="4" patternUnits="userSpaceOnUse">
        <path d="M0 0l4 4M-1 3l2 2M3-1l2 2" stroke="#ff0000" strokeWidth="1" />
      </pattern>
      <pattern id="sh" width="16" height="16" patternUnits="userSpaceOnUse">
        <path d="M0 0l16 16M-2 14l4 4M14-2l4 4" stroke={BLU} strokeWidth="1.400" />
      </pattern>
    </defs>
    <g shapeRendering="crispEdges" fill="none">
      {dots(1050, 282, 35.25, 13, 11, -5, -4, 5)}
      <path d="M860 282.500h635M1050.500 126v515" stroke="#fff" />
      <path d="M1075.500 313.500h243v264h-243z" stroke={YEL} />
      <path d="M1077.500 317h213v104h-213z" stroke="#00ff00" strokeWidth="2" />
      <path d="M1078.500 318.500h212v104h-212z" stroke={YEL} />
      <path d="M1133.500 486.500h156v88h-156z" stroke={YEL} fill="url(#ydot)" />
    </g>
    <T x={1145} y={377} w={78} s={22} c="#fff">VB/VDD</T>
    <T x={1170} y={536} w={82} s={22} c="#fff">VB/GND</T>
    <g shapeRendering="crispEdges" fill="none">
      <path d="M1214.500 350.500h28v37h-28zM1221.500 380.500h21v170h-21z" fill="url(#bh)" stroke="#0000c8" />
      <path d="M1232.500 381v170M1194.500 419.500h27v28h-27z" stroke="#0000ff" fill="url(#bh)" />
      <path d="M1126.500 377.500v-104h81v104h-11v-93h-59v93z" fill="url(#cdot)" stroke="#00ffff" />
      <path d="M1131.500 362v-83.500h71v84M1126.500 362.500h11M1196.500 362.500h11" stroke="#00ffff" />
      <path d="M1115 353h33v33h-33z" fill="url(#sh)" stroke={BLU} strokeWidth="2" strokeDasharray="9 3" />
      <path d="M1121.500 359.500h21v21h-21z" stroke="#ff0000" fill="url(#rh)" />
      <path d="M1126.500 362.500h11v15h-11z" stroke="#00ffff" />
      <path d="M1208 359.500h54.500v21h-67" stroke="#ff0000" />
      <path d="M1226 359.500h36.500v21h-36.500z" fill="url(#rh)" />
      <path d="M1204 347h50v46h-50z" stroke={YEL} strokeWidth="2" strokeDasharray="12 3" />
      <path d="M1188 353h80v34h-80z" stroke={YEL} strokeWidth="2" strokeDasharray="11 3" />
      <path d="M1184 349h89v42h-89z" stroke="#9a00e6" strokeWidth="2" />
      {[[1198, 360], [1214, 360], [1230, 360], [1245, 360], [1262, 360], [1198, 376], [1214, 376], [1230, 376], [1245, 376], [1262, 376]].map(([x, y]) => (
        <rect key={`${x}${y}`} x={x} y={y} width="3" height="3" fill={YEL} />
      ))}
      <path d="M1249.500 362.500h8v170h-8zM1253.500 362v170" stroke="#00ffff" fill="url(#cdot)" />
      <path d="M1198.500 422.500h22v22h-22z" stroke="#00ffff" fill="url(#cdot)" />
      <path d="M1186.500 502.500h92v56h-92z" stroke="#ffdcb4" />
      <path d="M1154.500 519.500h14v21h-14z" stroke="#ff0000" fill="url(#rh)" />
      <path d="M1196 540.500h65v-21h-4" stroke="#ff0000" />
      <path d="M1197 513h70v34h-70z" fill="url(#sh)" stroke={BLU} strokeWidth="2" strokeDasharray="11 3" />
      <path d="M1209 507h45v46h-45z" stroke={BLU} strokeWidth="2" strokeDasharray="10 3" />
      <path d="M1193 509h78v42h-78z" stroke="#9a00e6" strokeWidth="2" />
      <path d="M1149 514h32v33h-32z" stroke={YEL} strokeWidth="2" strokeDasharray="8 3" />
      <path d="M1207.500 521.500h8v72h-8zM1211.500 521v82" stroke="#00ffff" fill="url(#cdot)" />
      <path d="M1157.500 521.500h15v72h-15z" stroke="#00ffff" fill="url(#cdot)" />
      <path d="M1157.500 539.500h15v54h-15zM1157.500 593.500h58v15h-58z" stroke="#fff" fill="url(#cdot)" />
      <path d="M1165.500 540v61h50" stroke="#fff" />
      {contact(1127, 365)}
      {contact(1200, 365, 7)}
      {contact(1249, 365)}
      {contact(1161, 526)}
      {contact(1207, 526)}
      {contact(1249, 526)}
      <path d="M1153 273h28v13h-28zM1125 304h13v27h-13zM1196 311h13v27h-13zM1200 427h18v13h-18zM1224 435h16v29h-16zM1248 434h12v30h-12zM1158 559h14v28h-14zM1206 559h11v28h-11zM1174 595h24v13h-24z" fill="#000" />
      <path d="M1153 282.500h28" stroke="#fff" />
      <path d="M1166 279.500h8M1170.500 276v7M1208.500 428v24M1204 434.500h8" stroke={BLU} />
    </g>
    <Wide k={0.76} xs={[1122, 1154, 1189.5]} y={296.500}>VDD</Wide>
    <Wide k={0.76} xs={[1197.5, 1229.5, 1262, 1291.5]} y={420}>Vout</Wide>
    <Wide k={0.76} xs={[1173, 1205.5, 1219]} y={451.500}>Vin</Wide>
    <Wide k={0.76} xs={[1149, 1185, 1222]} y={617}>GND</Wide>
    <T x={1155} y={283} w={24} s={12} c="#fff" wt={300}>VDD</T>
    <T x={1136} y={330} w={24} s={12} c="#fff" rot wt={300}>VDD</T>
    <T x={1207} y={337.500} w={24} s={12} c="#fff" rot wt={300}>VDD</T>
    <T x={1200} y={438} w={18} s={12} c="#fff" wt={300}>Vin</T>
    <T x={1239} y={462} w={25} s={17.500} c="#fff" rot>Vin</T>
    <T x={1258} y={462} w={26} s={12} c="#fff" rot wt={300}>Vout</T>
    <T x={1170} y={585.500} w={24} s={12.500} c="#fff" rot wt={300}>GND</T>
    <T x={1216} y={585.500} w={24} s={12.500} c="#fff" rot wt={300}>GND</T>
    <T x={1174} y={605} w={24} s={12.500} c="#fff" wt={300}>GND</T>
  </svg>
);

const Backdrop = () => (
  <div className="absolute inset-0 flex justify-end bg-white">
    <div className="flex h-full w-[60px] flex-col text-[11px] text-[#333]">
      <div className="h-[8px] border-b border-[#bbb] bg-[#e7e7e5]" />
      <div className="h-[24px] bg-[#f2f2f2]" />
      <div className="h-[4px] bg-[#d00000]" />
      <div className="h-[46px] border-b border-[#bbb] bg-[#efefef]" />
      <div className="h-[21px] border-b border-[#999] bg-[#efefef]" />
      <div className="h-[24px] bg-white" />
      <div className="flex h-[19px] items-center border-t border-black bg-linear-to-b from-[#c9c9c9] to-[#b0b0b0] pl-[12px]">
        <span className="w-[32px] border-r border-[#888]">ock</span>
      </div>
      <div className="h-[397px] bg-white" />
      <div className="h-[14px] border-y border-[#bbb] bg-[#efefef]" />
      <div className="flex min-h-0 flex-1 items-start bg-[#efefef]">
        <div className="mt-[14px] flex h-full w-[50px] items-start rounded-tr-[4px] border-r border-t border-[#bbb]">
          <div className="mt-[20px] flex h-full w-[45px] border-t border-black bg-[#f6f6f6]">
            <span className="w-[30px] pl-[12px] pt-[21px]">in.</span>
            <div className="flex h-full w-[15px] flex-col bg-[#999]">
              <ScrollBtn d={UP} />
              <span className="flex h-[200px] flex-col items-center gap-[2px] rounded-t-[7px] border border-[#999] bg-[#bdbdbd] pt-[73px]">
                {[0, 1, 2, 3].map((k) => <span key={k} className="h-px w-[7px] bg-[#777]" />)}
              </span>
            </div>
          </div>
        </div>
        <div className="ml-auto mt-[7px] h-full w-[6px] bg-black" />
      </div>
    </div>
  </div>
);

const LeftWindow = () => (
  <div className="absolute left-0 top-0 flex h-[698px] w-[700px] flex-col border-b-2 border-[#666] bg-[#efefef] shadow-[48px_6px_18px_rgba(0,0,0,0.5)]">
    <div className="h-[8px] shrink-0 border-b border-[#bbb] bg-[#e7e7e5]" />
    <div className="flex h-[24px] shrink-0 items-center bg-[#f3f3f3] pl-[13px] pt-[2px] text-[11px] text-[#222]">
      <U w="w-[32px]" t="Edit" i={0} />
      <U w="w-[37px]" t="View" i={0} />
      <U w="w-[46px]" t="Create" i={0} />
      <U w="w-[43px]" t="Check" i={4} />
      <U w="w-[53px]" t="Options" i={1} />
      <U w="w-[53px]" t="Window" i={0} />
      <U w="w-[49px]" t="Calibre" i={4} />
      <U w="w-[40px]" t="Help" i={0} />
    </div>
    <div className="h-[4px] shrink-0 bg-[#d00000]" />
    <div className="mt-[4px] flex h-[30px] shrink-0">
      <Group w="w-[54px]" plain>
        <span className="-ml-[8px] flex h-full"><Ico n="floppyOk" /><Ico n="floppyOff" /></span>
      </Group>
      <Group w="w-[420px]">
        {["move", "copy", "stretch", "del", "info", "textEdit", "undoOff", "redo", "mirror"].map((n) => <Ico key={n} n={n} />)}
        <Arrow w="w-[13px]" />
        <Ico n="textUp" w="w-[29px]" /><Arrow />
        <Ico n="align" w="w-[29px]" /><Arrow />
        <Ico n="distribute" w="w-[28px]" /><Arrow w="w-[13px]" />
      </Group>
      <Group w="w-[132px]">
        {["zoomIn", "zoomOut", "zoomFit", "zoomSel"].map((n) => <Ico key={n} n={n} />)}
      </Group>
      <Group w="w-[94px]"><Ico n="inst" /><Ico n="wire" /></Group>
    </div>
    <div className="flex h-[32px] shrink-0">
      <Group w="w-[75px]" plain>
        <span className="ml-[4px] h-px w-[7px] bg-[#777]" />
        <Ico n="up" /><Ico n="top" />
      </Group>
      <Group w="w-[218px]">
        <Combo cls="ml-[5px] h-[21px] w-[144px]">Basic</Combo>
        <Ico n="formSave" w="w-[30px]" /><Ico n="formEye" />
      </Group>
      <Group w="w-[197px]">
        <Ico n="checkCur" on light />
        <Ico n="instCur" /><Ico n="wireCur" /><Ico n="pinCur" /><Ico n="textCur" />
        <VLine />
        <Ico n="propCur" />
      </Group>
      <Group w="w-[179px]">
        <Combo cls="ml-[4px] h-[21px] w-[148px]">
          <Glass size={20} drop />
          <span className="font-semibold tracking-[0.5px] text-[#c6c6c6]">Search</span>
        </Combo>
        <Arrow w="w-[22px]" />
      </Group>
      <Group w="w-[31px]" />
    </div>
    <div className="mt-[2px] flex h-[554px] shrink-0">
      <div className="-mt-[2px] flex h-[556px] w-[106px] shrink-0 flex-col overflow-hidden text-[11px] text-[#222]">
        <DockHead title="" q cls="h-[20px]" />
        <div className="flex h-[33px] shrink-0 flex-col pt-[2px]">
          <span className="-ml-[1px] text-[12px] font-semibold leading-[15px]">stances</span>
          <span className="pl-[7px] leading-[13px]">inv</span>
        </div>
        <div className="flex h-[20px] shrink-0 items-center">
          <div className="flex h-[19px] w-[86px] items-center justify-end rounded-r-[4px] border border-l-0 border-[#aaa] bg-white"><RedDrop /></div>
          <Arrow w="w-[22px]" />
        </div>
        <div className="mt-[2px] flex h-[270px] w-[104px] shrink-0 flex-col border-r border-t border-r-[#ccc] border-t-black bg-white">
          <div className="flex h-[18px] shrink-0 items-center justify-between bg-linear-to-b from-[#cfcfcf] to-[#a8a8a8] pr-[6px]">
            <span className="-ml-[5px]">Name</span>
            <svg width="8" height="5" viewBox="0 0 8 5"><path d="M0 5h8L4 0z" fill="#fff" stroke="#777" strokeWidth=".5" /></svg>
          </div>
          <span className="mt-[16px] h-[16px] leading-[16px]">33e2r)</span>
          <span className="h-[16px] leading-[16px]">33e2r)</span>
        </div>
        <div className="mb-px h-[4px] shrink-0 bg-[#d0d2d6]" />
        <DockHead title="litor" q cls="h-[20px]" pad="pl-0" />
        <div className="mt-[5px] flex h-[176px] w-[102px] shrink-0 flex-col justify-end border-r border-t border-r-[#ddd] border-t-black bg-white">
          <div className="flex h-[15px] bg-[#919191]">
            <span className="flex w-[65px] items-center gap-px rounded-r-[7px] border border-l-0 border-[#888] bg-[#bdbdbd]">
              {[0, 1, 2, 3, 4].map((k) => <span key={k} className="h-[6px] w-px bg-[#777]" />)}
            </span>
            <span className="ml-auto flex w-[15px] items-center justify-center border-b border-[#666] bg-[#e2e2e2]">
              <svg width="8" height="10" viewBox="0 0 8 10"><path d="M1 1v8l6-4z" fill="#fafafa" stroke="#999" /></svg>
            </span>
          </div>
        </div>
      </div>
      <div className="w-[6px] shrink-0 border-l border-[#b4b4b8] bg-[#d2d4d9]" />
      <Schematic />
    </div>
    <div className="flex h-[18px] shrink-0 items-center border-b border-[#999] bg-linear-to-b from-[#e6e6e6] to-[#b8b8b8] text-[11px] text-[#222]">
      <span className="w-[321px]">SingleSelectPt()</span>
      <span>M: geScroll(nil "e" nil)</span>
    </div>
  </div>
);

const LAYERS = [
  ["PFLD", "drw", "#ffff00", "thin", "#ff0"],
  ["VTPH", "drw", "#00cc66", "thick", "#0c6"],
  ["SAB", "drw", "#ff2010", "thick", "#f21"],
  ["VTNH", "drw", "#d0d0e8", "thick"],
  ["CT", "drw", "#00ff00", "fill"],
  ["DDP", "drw", "#c0b030", "thin", "#ff0"],
  ["DDN", "drw", "#333399", "solid"],
  ["HVBN", "drw", "#d02828", "thin"],
  ["TOW", "drw", "#9a00ff", "thick"],
  ["ONO", "drw", "#ffff00", "thin"],
  ["ONO", "dumr", "#ffcc00", "thin", "#fc0"],
  ["CG", "drw", "#00ff00", "thin"],
  ["CGDUM", "drw", "#d0d0e8", "thin"],
  ["MIM", "drw", "#ffb0a8", "thick", "#fff"],
  ["CW", "drw", "#ffb0a8", "dots"],
];
const Swatch = ({ c, k, d }) => (
  <svg width="15" height="15" viewBox="0 0 15 15" className="shrink-0" shapeRendering="crispEdges">
    <path d="M0 0h15v15H0z" fill="#000" />
    {k === "solid" && <path d="M1 1h13v13H1z" fill={c} />}
    {k === "thin" && <path d="M1.500 1.500h12v12h-12z" fill="none" stroke={c} />}
    {(k === "thick" || k === "dots") && <path d="M2 2h11v11h-11z" fill="none" stroke={c} strokeWidth={k === "dots" ? 1 : 2} />}
    {k === "fill" && (
      <g>
        <path d="M1 1h13v13H1z" fill={c} />
        <path d="M3 3.500h10M3 5.500h10M3 7.500h10M3 9.500h10M3 11.500h10" stroke="#000" strokeDasharray="1 1" />
        <path d="M2 4.500h10M2 6.500h10M2 8.500h10M2 10.500h10" stroke="#000" strokeDasharray="1 1" />
      </g>
    )}
    {k === "dots" && <path d="M4 4.500h8M5 7.500h8M4 10.500h8" stroke="#9fe4f4" strokeDasharray="1 2" />}
    {d && <path d="M5 5h1v1H5z" fill={d} />}
  </svg>
);

const Palette = () => (
  <div className="flex h-[517px] w-[175px] shrink-0 flex-col overflow-hidden bg-[#efefef] pl-px text-[11px] text-[#222]">
    <DockHead title="Palette" q cls="h-[20px]" pad="pl-[12px]" />
    <DockHead title="Layers" cls="h-[20px]" pad="pl-[12px]" />
    <Combo cls="mt-px h-[19px] w-[173px]" grad>
      <svg width="15" height="14" viewBox="0 0 24 24" className="shrink-0">{ICONS.funnel}</svg>
      <span className="ml-[3px]">All Layers</span>
    </Combo>
    <div className="flex h-[21px] shrink-0 items-center border-b border-[#ccc]">
      <Check /><span className="ml-[5px] w-[31px]">Valid</span>
      <Check off /><span className="ml-[5px] w-[33px]">Used</span>
      <Check off /><span className="ml-[5px]">Routing</span>
    </div>
    <div className="flex h-[21px] shrink-0 items-center">
      <Combo cls="h-[19px] w-[155px]">
        <Glass />
        <span className="ml-[2px] font-semibold tracking-[0.5px] text-[#cfcfcf]">Filter</span>
      </Combo>
      <Arrow w="w-[18px]" />
    </div>
    <Combo cls="h-[19px] w-[173px]" grad>
      <Swatch c="#ffff00" k="thin" />
      <span className="ml-[4px]">ONO drawing</span>
    </Combo>
    <div className="flex h-[22px] shrink-0 items-center pl-[10px]">
      {["AV", "NV", "AS", "NS"].map((t) => (
        <span key={t} className="flex w-[43.600px] shrink-0 items-center"><span className="w-[22px]">{t}</span><Arrow /></span>
      ))}
    </div>
    <div className="flex h-[269px] w-[172px] shrink-0 border-l border-t border-black bg-white">
      <div className="flex w-[155px] shrink-0 flex-col overflow-hidden">
        <div className="flex h-[18px] shrink-0 items-center bg-linear-to-b from-[#cacaca] to-[#ababab] text-center">
          <span className="flex w-[17px] justify-center border-r border-[#777] py-[5px]">
            <svg width="8" height="5" viewBox="0 0 8 5"><path d="M0 5h8L4 0z" fill="#fff" stroke="#777" strokeWidth=".5" /></svg>
          </span>
          <span className="w-[65px] border-r border-[#777]">Layer</span>
          <span className="w-[30px] border-r border-[#777]">Pu...</span>
          <span className="w-[22px] border-r border-[#777]">V</span>
          <span className="w-[21px] border-r border-[#777]">S</span>
        </div>
        {LAYERS.map(([n, p, c, k, d], i) => (
          <div key={i} className={`flex h-[17px] shrink-0 items-center pl-[1px] ${i === 9 ? "outline-2 -outline-offset-1 outline-black" : ""}`}>
            <Swatch c={c} k={k} d={d} />
            <span className="ml-[4px] w-[65px]">{n}</span>
            <span className="w-[26px] shrink-0 overflow-hidden">{p}</span>
            <span className="ml-[6px]"><Check /></span>
            <span className="ml-[9px]"><Check /></span>
          </div>
        ))}
      </div>
      <div className="flex w-[16px] flex-col bg-[#919191]">
        <ScrollBtn d={UP} />
        <span className="h-[44px]" />
        <Thumb h="h-[20px]" />
        <span className="flex-1" />
        <ScrollBtn d={DOWN} />
      </div>
    </div>
    <div className="my-[1px] h-[5px] shrink-0 bg-[#d0d2d6]" />
    <DockHead title="Objects" cls="h-[19px]" pad="pl-[12px]" />
    <div className="mt-px flex h-[56px] w-[174px] shrink-0 border-b-2 border-l border-t border-black bg-white">
      <div className="flex w-[155px] shrink-0 flex-col">
        <div className="flex h-[18px] items-center bg-linear-to-b from-[#cacaca] to-[#ababab] text-center">
          <span className="w-[112px] border-r border-[#777] font-bold">Objects</span>
          <span className="w-[22px] border-r border-[#777]">V</span>
          <span className="w-[21px] border-r border-[#777]">S</span>
        </div>
        {["Instances", "Pins"].map((n) => (
          <div key={n} className="flex h-[17px] items-center pl-[11px]">
            <span className="h-full w-[1px] border-l border-dotted border-[#777]" />
            <span className="w-[9px] border-t border-dotted border-[#777]" />
            <span className="ml-[3px] w-[93px]">{n}</span>
            <Check />
            <span className="ml-[9px]"><Check /></span>
          </div>
        ))}
      </div>
      <div className="flex w-[16px] flex-col bg-[#919191]">
        <ScrollBtn d={UP} />
        <Thumb h="h-[19px]" />
        <span className="flex-1" />
        <ScrollBtn d={DOWN} />
      </div>
    </div>
    <div className="flex h-[22px] shrink-0 items-start">
      <span className="flex h-[22px] w-[55px] items-center justify-center border-b border-r border-[#888]">Objects</span>
      <span className="flex h-[21px] w-[43px] items-center justify-center border-b border-r border-[#aaa] bg-[#cfcfcf]">Grids</span>
    </div>
  </div>
);

const RightWindow = () => (
  <div className="absolute left-[678px] top-0 flex h-[724px] w-[818px] flex-col border-x border-[#8a8a8a] bg-[#efefef] shadow-[0_0_16px_rgba(0,0,0,0.6)]">
    <div className="flex h-[32px] shrink-0 items-center justify-end gap-[24px] border-b border-[#999] bg-[#f4f4f4] pb-[5px] pr-[13px]">
      <svg width="10" height="10" viewBox="0 0 10 10"><path d="M1 9h8" stroke="#2d3436" strokeWidth="2" /></svg>
      <svg width="10" height="10" viewBox="0 0 10 10"><path d="M2 2h6v6H2z" fill="none" stroke="#2d3436" strokeWidth="2" /></svg>
      <svg width="10" height="10" viewBox="0 0 10 10"><path d="M1 1l8 8M9 1l-8 8" stroke="#2d3436" strokeWidth="2" /></svg>
    </div>
    <div className="flex h-[24px] shrink-0 items-center bg-[#f3f3f3] pl-[10px] pt-[2px] text-[11px] text-[#222]">
      <U w="w-[50px]" t="Launch" i={0} />
      <U w="w-[30px]" t="File" i={0} />
      <U w="w-[32px]" t="Edit" i={0} />
      <U w="w-[37px]" t="View" i={0} />
      <U w="w-[46px]" t="Create" i={0} />
      <U w="w-[42px]" t="Verify" i={4} />
      <U w="w-[75px]" t="Connectivity" i={2} />
      <U w="w-[53px]" t="Options" i={0} />
      <U w="w-[40px]" t="Tools" i={0} />
      <U w="w-[54px]" t="Window" i={0} />
      <U w="w-[59px]" t="Optimize" i={4} />
      <U w="w-[61px]" t="Floorplan" i={7} />
      <U w="w-[39px]" t="Place" i={0} />
      <U w="w-[42px]" t="Route" i={0} />
      <U w="w-[50px]" t="Calibre" i={4} />
      <span className="pt-[4px]"><More w="w-[14px]" /></span>
      <svg width="76" height="22" viewBox="0 0 76 22" className="shrink-0">
        <text transform="scale(.74 1)" x="4" y="16" fontSize="17" fontWeight="700" fontFamily="'Open Sans', 'Noto Sans', sans-serif" textLength="97" lengthAdjust="spacing" fill="#3c3c3c">
          cadence
        </text>
        <path d="M13 3h6" stroke="#e03030" strokeWidth="1.500" />
      </svg>
    </div>
    <div className="h-[4px] shrink-0 bg-[#d00000]" />
    <div className="mt-[4px] flex h-[30px] shrink-0">
      <Group w="w-[77px]"><Ico n="open" /><Ico n="floppy" w="w-[33px]" /></Group>
      <Group w="w-[376px]">
        <Ico n="undo" /><Ico n="redo" />
        <VLine />
        {["move", "copy", "stretch", "del", "copyR", "info", "alignLeft"].map((n) => <Ico key={n} n={n} />)}
        <VLine />
        <Ico n="rotate" /><Ico n="mirror" />
        <span className="flex flex-1 justify-end"><More /></span>
      </Group>
      <Group w="w-[97px]">
        <Ico n="inst" w="w-[32px]" />
        <span className="flex w-[32px] flex-col items-center">
          <span className="h-[8px] text-[10px] font-semibold leading-[7px] text-[#888]">abc</span>
          <svg width="22" height="6" viewBox="0 0 22 6"><path d="M2 3h18" stroke="#333" /><path d="M1 1h4v4H1zM17 1h4v4h-4z" fill="#ffe84a" stroke="#a08a10" strokeWidth=".7" /></svg>
        </span>
        <span className="flex flex-1 justify-end pr-[2px]"><More /></span>
      </Group>
      <Group w="w-[56px]"><Ico n="zoomIn" /><span className="flex flex-1 justify-end pr-[2px]"><More /></span></Group>
      <Group w="w-[100px]">
        <Combo cls="ml-[4px] h-[21px] w-[73px]">Classic</Combo>
        <span className="flex flex-1 justify-end pr-[1px]"><More /></span>
      </Group>
      <Group w="w-[110px]"><Combo cls="ml-[1px] h-[21px] w-[102px]">Off</Combo></Group>
    </div>
    <div className="flex h-[30px] shrink-0">
      <Group w="w-[377px]">
        <Ico n="selRect" /><Ico n="fence" on /><Ico n="stack" on /><Ico n="ruler" /><Ico n="lasso" />
        <VLine />
        <Ico n="stop" /><Ico n="warnArrows" /><Ico n="lamp" w="w-[28px]" />
        <VLine />
        <Ico n="drawEdit" on w="w-[34px]" />
        <Ico n="warnBurst" on light w="w-[30px]" />
        <span className="flex flex-1 justify-end pr-[3px]"><More /></span>
      </Group>
      <Group w="w-[226px]">
        <span className="flex text-[10.500px] text-[#222]">
          <span className="ml-[4px] w-[52px] overflow-hidden whitespace-nowrap">(F)Select:2</span>
          <span className="ml-[9px] w-[49px] whitespace-nowrap">Sel(N):1</span>
          <span className="w-[44px] whitespace-nowrap">Sel(I):0</span>
          <span className="w-[45px] whitespace-nowrap">Sel(O):2</span>
        </span>
        <span className="flex flex-1 justify-end pr-[3px]"><More /></span>
      </Group>
      <Group w="w-[55px]"><BigIco n="list" w="w-[34px]" /><More /></Group>
      <Group w="w-[64px]"><Ico n="railPlay" w="w-[29px]" /><Arrow w="w-[14px]" /><span className="flex flex-1 justify-center"><More /></span></Group>
      <Group w="w-[55px]"><BigIco n="form" w="w-[33px]" /><span className="flex flex-1 justify-end pr-px"><More /></span></Group>
      <Group w="w-[39px]"><BigIco n="rails" /></Group>
    </div>
    <div className="flex h-[517px] shrink-0">
      <Palette />
      <div className="w-[6px] shrink-0 bg-[#d2d4d9]" />
      <div className="flex flex-col">
        <div className="h-[2px] shrink-0 bg-[#d00000]" />
        <LayoutCanvas />
      </div>
    </div>
    <div className="flex h-[30px] shrink-0">
      <Group w="w-[816px]">
        {["tree", "floor", "bracket"].map((n) => <Ico key={n} n={n} />)}
        <BigIco n="ring" />
        <Ico n="shift" />
        <BigIco n="cross" />
        <Ico n="blocks" /><Ico n="folderAdd" />
        {["bars", "ladder", "globe", "viewEye", "boxCross", "boxSwap", "boxMove", "boxIn", "notePen", "boxArrows"].map((n) => <BigIco key={n} n={n} />)}
      </Group>
    </div>
    <div className="flex h-[30px] shrink-0">
      <Group w="w-[816px]">
        {["pairs", "bag", "stamp"].map((n) => <Ico key={n} n={n} />)}
        <BigIco n="binocular" />
        {["link", "mail", "copies", "pairsOk", "warnCell", "schCell", "schChip", "loop", "burst"].map((n) => <Ico key={n} n={n} />)}
        <BigIco n="screenOk" /><BigIco n="probe" /><BigIco n="probe2" />
        <Ico n="loopWarn" /><Ico n="docWave" /><BigIco n="wave" />
      </Group>
    </div>
    <div className="flex h-[30px] shrink-0"><Group w="w-[816px]" /></div>
  </div>
);

export default function App() {
  return (
    <div className={`relative h-[722px] w-[1541px] overflow-hidden bg-white ${UI}`}>
      <Backdrop />
      <LeftWindow />
      <RightWindow />
    </div>
  );
}
